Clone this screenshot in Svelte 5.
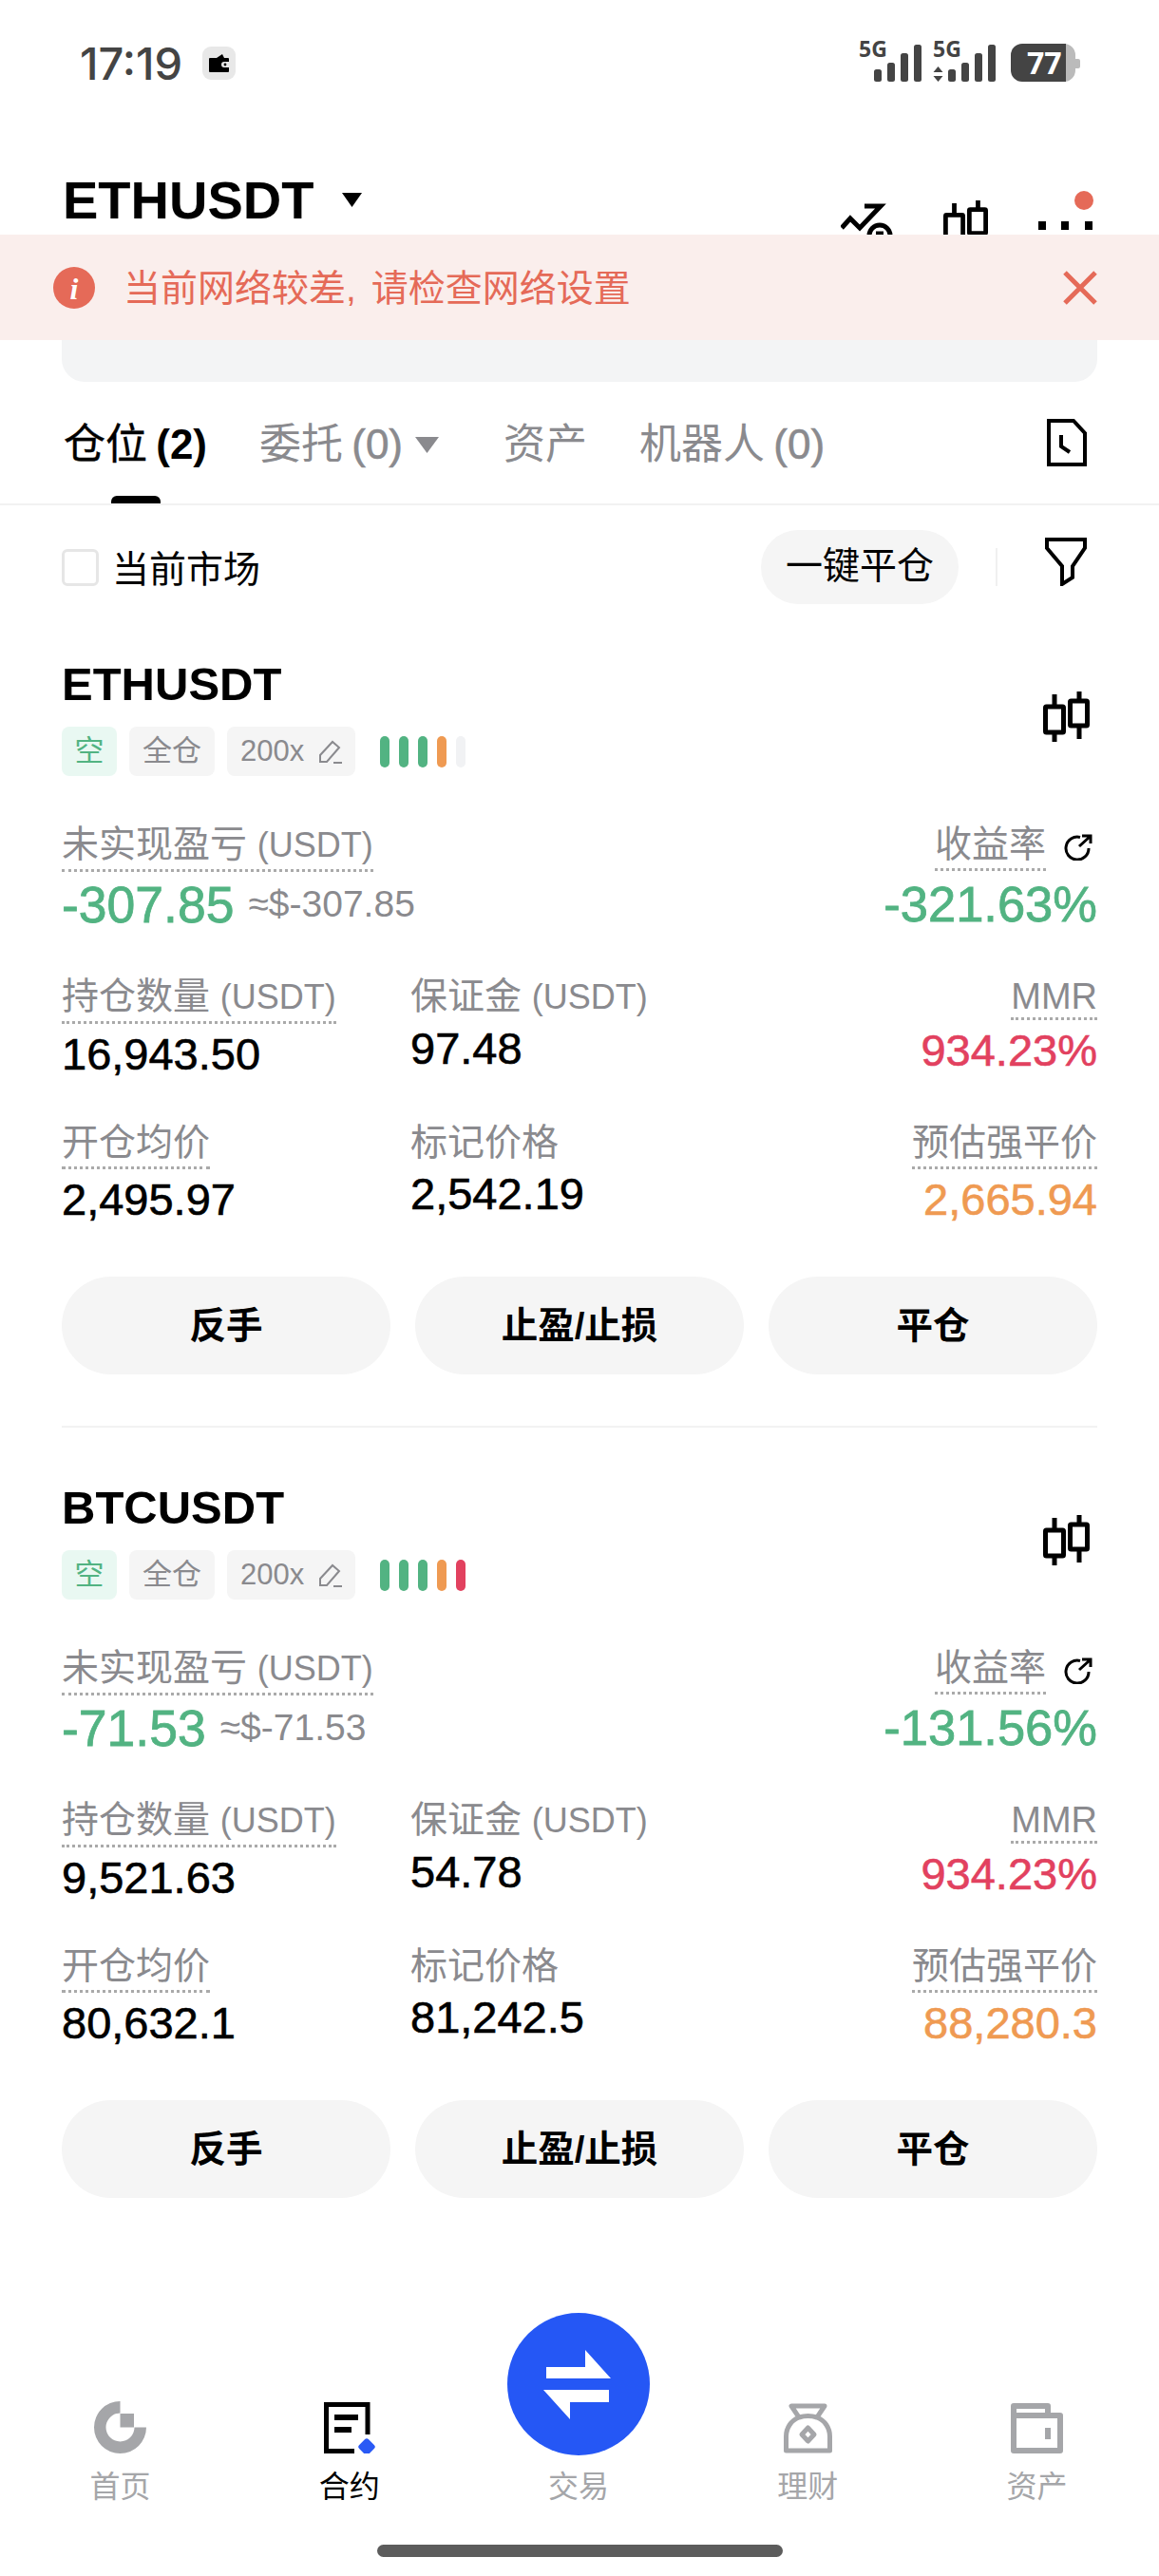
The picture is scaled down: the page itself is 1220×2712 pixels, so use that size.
<script>
  const tabs = [
    { label: '仓位', count: '(2)', active: true },
    { label: '委托', count: '(0)', caret: true },
    { label: '资产', count: '' },
    { label: '机器人', count: '(0)' }
  ];

  const positions = [
    {
      symbol: 'ETHUSDT',
      pnl: '-307.85',
      usd: '≈$-307.85',
      roe: '-321.63%',
      size: '16,943.50',
      margin: '97.48',
      mmr: '934.23%',
      entry: '2,495.97',
      mark: '2,542.19',
      liq: '2,665.94',
      risk: ['#52b382', '#52b382', '#52b382', '#ef9a52', '#f1f2f4']
    },
    {
      symbol: 'BTCUSDT',
      pnl: '-71.53',
      usd: '≈$-71.53',
      roe: '-131.56%',
      size: '9,521.63',
      margin: '54.78',
      mmr: '934.23%',
      entry: '80,632.1',
      mark: '81,242.5',
      liq: '88,280.3',
      risk: ['#52b382', '#52b382', '#52b382', '#ef9a52', '#e2415f']
    }
  ];

  const nav = ['首页', '合约', '交易', '理财', '资产'];
</script>

{#snippet candle(cls)}
  <svg class={cls} viewBox="0 0 49 53" fill="none" stroke="#000" stroke-width="5">
    <rect x="2.5" y="16" width="19" height="27" rx="1" />
    <path d="M12 3v13M12 43v10" />
    <rect x="28.5" y="10" width="18" height="26" rx="1" />
    <path d="M38 0v10M38 36v14" />
  </svg>
{/snippet}

<div class="page">
  <div class="status">
    <span class="time">17:19</span>
    <span class="wallet">
      <svg width="23" height="21" viewBox="0 0 23 21">
        <path d="M9 5 15 1l2 4z" fill="#000" />
        <path d="M2 5h19a1 1 0 0 1 1 1v3h-5a3 3 0 0 0 0 6h5v4a1 1 0 0 1-1 1H2a1 1 0 0 1-1-1V6a1 1 0 0 1 1-1z" fill="#000" />
        <circle cx="18" cy="12" r="1.4" fill="#000" />
      </svg>
    </span>
    <svg class="signal" width="235" height="62" viewBox="0 -12 235 62">
      <g fill="#444">
        <text x="0" y="20" class="net">5G</text>
        <rect x="16" y="33" width="8" height="13" rx="2.5" />
        <rect x="30" y="26" width="8" height="20" rx="2.5" />
        <rect x="44" y="16" width="8" height="30" rx="2.5" />
        <rect x="58" y="7" width="8" height="39" rx="2.5" />
        <text x="78" y="20" class="net">5G</text>
        <path d="M83.500 30l5 6h-10zM83.500 46l5-6h-10z" />
        <rect x="94" y="33" width="8" height="13" rx="2.5" />
        <rect x="108" y="26" width="8" height="20" rx="2.5" />
        <rect x="122" y="16" width="8" height="30" rx="2.5" />
        <rect x="136" y="7" width="8" height="39" rx="2.5" />
      </g>
      <path d="M212 6h4a12 12 0 0 1 12 12v4h3a2 2 0 0 1 2 2v6a2 2 0 0 1-2 2h-3v2a12 12 0 0 1-12 12h-4z" fill="#bbb" />
      <path d="M172 6h46v40h-46a12 12 0 0 1-12-12V18a12 12 0 0 1 12-12z" fill="#444" />
      <text x="177" y="38" class="batt">77</text>
    </svg>
  </div>

  <div class="header">
    <span class="pair">ETHUSDT</span>
    <svg class="pair-caret" width="21" height="15" viewBox="0 0 21 15"><path d="M0 0h21L10.500 15z" fill="#000" /></svg>
    <div class="header-icons">
      <svg width="60" height="60" viewBox="0 0 60 60" fill="none" stroke="#000" stroke-width="5">
        <path d="M1 40 10 30 20 40 42 17H25" />
        <circle cx="41" cy="48" r="11" />
        <path d="M37 46h8" />
      </svg>
      {@render candle('candle-top')}
      <svg width="58" height="60" viewBox="0 0 58 60">
        <circle cx="48" cy="11" r="10" fill="#e56a58" />
        <rect x="0" y="33" width="8" height="9" />
        <rect x="24" y="33" width="8" height="9" />
        <rect x="49" y="33" width="8" height="9" />
      </svg>
    </div>
  </div>

  <div class="banner">
    <svg width="44" height="44" viewBox="0 0 44 44">
      <circle cx="22" cy="22" r="22" fill="#e56a58" />
      <text x="22" y="34" class="info">i</text>
    </svg>
    <span class="banner-text">当前网络较差, 请检查网络设置</span>
    <svg class="banner-close" width="36" height="36" viewBox="0 0 36 36" stroke="#e56a58" stroke-width="5">
      <path d="M2 2l32 32M34 2 2 34" />
    </svg>
  </div>
  <div class="hidden-card"></div>

  <div class="tabs">
    {#each tabs as tab}
      <div class="tab" class:active={tab.active} class:has-caret={tab.caret}>
        <span>{tab.label}{#if tab.count}{' '}<b class="count">{tab.count}</b>{/if}</span>
        {#if tab.caret}
          <svg width="25" height="17" viewBox="0 0 25 17"><path d="M0 0h25L12.500 17z" fill="#8a8a8e" /></svg>
        {/if}
      </div>
    {/each}
    <svg class="doc" width="42" height="50" viewBox="0 0 42 50" fill="none" stroke="#000" stroke-width="4">
      <path d="M2 2h26l12 13v33H2z" />
      <path d="M15 17v12l9 6" />
    </svg>
  </div>

  <div class="filter-row">
    <span class="check"></span>
    <span class="check-label">当前市场</span>
    <span class="close-all">一键平仓</span>
    <span class="vline"></span>
    <svg width="44" height="51" viewBox="0 0 44 51" fill="none" stroke="#000" stroke-width="4">
      <path d="M2 2h40v9L29 30v12l-11 7V30L2 11z" />
    </svg>
  </div>

  {#each positions as p, i}
    <section class="card" class:last={i === positions.length - 1}>
      <div class="card-head">
        <div>
          <div class="symbol">{p.symbol}</div>
          <div class="tags">
            <span class="tag short">空</span>
            <span class="tag">全仓</span>
            <span class="tag">200x
              <svg width="24" height="25" viewBox="0 0 24 25" fill="none" stroke="#8a8a8e" stroke-width="2">
                <path d="M1 23v-7L14 2l7 6L8 23zM15 24h9" />
              </svg>
            </span>
            <span class="risk">
              {#each p.risk as color}
                <i style="background: {color}"></i>
              {/each}
            </span>
          </div>
        </div>
        {@render candle('candle-side')}
      </div>

      <div class="pnl-row">
        <div>
          <div><span class="label dotted">未实现盈亏 <span class="unit">(USDT)</span></span></div>
          <div class="pnl-value">
            <span class="big green">{p.pnl}</span>
            <span class="usd">{p.usd}</span>
          </div>
        </div>
        <div class="right">
          <div class="roe-label">
            <span class="label dotted">收益率</span>
            <svg width="30" height="28" viewBox="0 0 30 28" fill="none" stroke="#000" stroke-width="3">
              <path d="M17 3.500A12 12 0 1 0 26 15M16 13 27 3M19 2h9v8" />
            </svg>
          </div>
          <div class="pnl-value"><span class="big roe green">{p.roe}</span></div>
        </div>
      </div>

      <div class="grid row-two">
        <div>
          <span class="label dotted">持仓数量 <span class="unit">(USDT)</span></span>
          <div class="value">{p.size}</div>
        </div>
        <div>
          <span class="label">保证金 <span class="unit">(USDT)</span></span>
          <div class="value">{p.margin}</div>
        </div>
        <div class="right">
          <span class="label dotted tight">MMR</span>
          <div class="value red">{p.mmr}</div>
        </div>
      </div>

      <div class="grid">
        <div>
          <span class="label dotted">开仓均价</span>
          <div class="value">{p.entry}</div>
        </div>
        <div>
          <span class="label">标记价格</span>
          <div class="value">{p.mark}</div>
        </div>
        <div class="right">
          <span class="label dotted">预估强平价</span>
          <div class="value orange">{p.liq}</div>
        </div>
      </div>

      <div class="actions">
        <span>反手</span>
        <span>止盈/止损</span>
        <span>平仓</span>
      </div>
    </section>
  {/each}

  <nav class="nav">
    {#each nav as item, i}
      <div class="nav-item" class:current={i === 1}>
        {#if i === 0}
          <svg width="55" height="55" viewBox="0 0 55 55" fill="#a5a6a9">
            <path d="M27.500 0A27.500 27.500 0 1 0 55 27.500H42.500A15 15 0 1 1 27.500 12.500z" />
            <rect x="27.500" y="13" width="14.500" height="14.500" />
          </svg>
        {:else if i === 1}
          <svg width="55" height="55" viewBox="0 0 55 55">
            <path d="M47 35V3.500H3.500v49H33" fill="none" stroke="#000" stroke-width="5" />
            <rect x="12" y="14" width="25" height="6" />
            <rect x="12" y="27" width="18" height="6" />
            <rect x="39" y="41" width="14" height="14" rx="3" transform="rotate(45 46 48)" fill="#2a5af5" />
          </svg>
        {:else if i === 2}
          <div class="trade">
            <svg width="150" height="150" viewBox="0 0 150 150" fill="#fff">
              <path d="M82 39 109 69H41V57H82z" />
              <path d="M107 81H38L66 112V94h41z" />
            </svg>
          </div>
        {:else if i === 3}
          <svg width="51" height="55" viewBox="0 0 51 55" fill="none" stroke="#a5a6a9" stroke-width="5" stroke-linejoin="round">
            <path d="M8 5h35l-8 12c8 3 13.500 11 13.500 20v15h-46V37c0-9 5.500-17 13.500-20z" />
            <path d="M16 17q9.500-3 19 0" />
            <path d="M25.500 28l6.500 7-6.500 7-6.500-7z" />
          </svg>
        {:else}
          <svg width="55" height="55" viewBox="0 0 55 55" fill="none" stroke="#a5a6a9" stroke-width="6" stroke-linejoin="round">
            <path d="M3 5h36v10h13v37H3zM3 15h36" />
            <path d="M39 28v12" />
          </svg>
        {/if}
        <span>{item}</span>
      </div>
    {/each}
  </nav>
  <div class="home-bar"></div>
</div>

<style>
  :global(body) {
    margin: 0;
    background: #fff;
  }
  .page {
    width: 1220px;
    min-height: 2712px;
    display: flex;
    flex-direction: column;
    overflow: hidden;
    font-family: "Liberation Sans", "Noto Sans CJK SC", sans-serif;
    color: #000;
  }

  .status {
    height: 132px;
    display: flex;
    align-items: center;
    padding-left: 84px;
  }
  .time {
    font-family: Inter, sans-serif;
    font-size: 47px;
    font-weight: 500;
    color: #444;
    line-height: 1;
  }
  .wallet {
    width: 35px;
    height: 35px;
    margin-left: 21px;
    background: #e8e8e8;
    border-radius: 9px;
    display: flex;
    align-items: center;
    justify-content: center;
  }
  .signal {
    margin-left: auto;
    margin-right: 81px;
    margin-top: -14px;
  }
  .net {
    font-family: "Noto Sans", sans-serif;
    font-size: 23px;
    font-weight: 700;
  }
  .batt {
    font-family: "Noto Sans", sans-serif;
    font-size: 32px;
    font-weight: 700;
    fill: #fff;
  }
  .info {
    font-family: "Liberation Serif", serif;
    font-size: 32px;
    font-weight: 700;
    font-style: italic;
    text-anchor: middle;
    fill: #fff;
  }

  .header {
    height: 115px;
    box-sizing: border-box;
    padding: 51px 69px 0 66px;
    display: flex;
    overflow: hidden;
  }
  .pair {
    font-size: 56px;
    font-weight: 700;
    line-height: 56px;
  }
  .pair-caret {
    margin: 20px 0 0 30px;
  }
  .header-icons {
    margin-left: auto;
    margin-top: 17px;
    display: flex;
    align-items: flex-start;
  }
  .candle-top {
    width: 47px;
    height: 51px;
    margin: 11px 53px 0 48px;
  }

  .banner {
    height: 111px;
    background: #faeeec;
    display: flex;
    align-items: center;
    padding: 0 65px 0 56px;
  }
  .banner-text {
    margin: -5px 0 0 30px;
    font-size: 39px;
    word-spacing: 5px;
    color: #e56a58;
  }
  .banner-close {
    margin-left: auto;
  }
  .hidden-card {
    height: 44px;
    margin: 0 65px;
    background: #f3f4f5;
    border-radius: 0 0 24px 24px;
  }

  .tabs {
    height: 130px;
    box-sizing: border-box;
    padding: 0 76px 0 67px;
    display: flex;
    align-items: flex-start;
    gap: 55px;
    border-bottom: 2px solid #f2f2f2;
  }
  .tab {
    position: relative;
    font-size: 44px;
    line-height: 50px;
    margin-top: 41px;
    color: #8a8a8e;
    display: flex;
    align-items: center;
    white-space: pre;
    word-spacing: -3px;
  }
  .tab.has-caret {
    padding-right: 13px;
  }
  .tab svg {
    margin-left: 13px;
  }
  .tab.active {
    color: #000;
    -webkit-text-stroke: 0.4px #000;
  }
  .count {
    font-weight: 400;
    -webkit-text-stroke: 0.6px #8a8a8e;
  }
  .tab.active .count {
    font-weight: 700;
    -webkit-text-stroke: 0;
  }
  .tab.active::after {
    content: "";
    position: absolute;
    left: 50px;
    top: 79px;
    width: 52px;
    height: 8px;
    background: #000;
    border-radius: 6px 6px 0 0;
  }
  .doc {
    margin-left: auto;
    margin-top: 39px;
  }

  .filter-row {
    box-sizing: border-box;
    height: 104px;
    padding: 26px 76px 0 65px;
    display: flex;
    align-items: center;
  }
  .filter-row > * {
    flex: none;
  }
  .check {
    box-sizing: border-box;
    width: 39px;
    height: 39px;
    border: 3px solid #e6e6e6;
    border-radius: 6px;
  }
  .check-label {
    margin: -2px 0 0 14px;
    font-size: 39px;
  }
  .close-all {
    margin-left: auto;
    width: 208px;
    height: 78px;
    border-radius: 39px;
    background: #f5f5f5;
    font-size: 39px;
    line-height: 76px;
    text-align: center;
  }
  .vline {
    width: 2px;
    height: 40px;
    margin: 0 50px 0 39px;
    background: #f0f0f0;
  }
  .filter-row svg {
    margin-top: -12px;
  }

  .card {
    height: 867px;
    box-sizing: border-box;
    margin: 0 65px;
    padding-top: 56px;
    border-bottom: 2px solid #f2f2f2;
  }
  .card.last {
    border-bottom: 0;
  }
  .card-head {
    display: flex;
    justify-content: space-between;
    align-items: center;
  }
  .candle-side {
    width: 49px;
    height: 53px;
    margin-right: 8px;
  }
  .symbol {
    font-size: 49px;
    font-weight: 700;
    line-height: 56px;
  }
  .tags {
    margin-top: 17px;
    display: flex;
    gap: 13px;
  }
  .tag {
    height: 52px;
    box-sizing: border-box;
    padding: 0 14px;
    background: #f5f5f5;
    border-radius: 8px;
    color: #8a8a8e;
    font-size: 31px;
    line-height: 50px;
    display: flex;
    align-items: center;
    gap: 16px;
  }
  .tag.short {
    background: #e9f8f2;
    color: #52b382;
    width: 58px;
    padding: 0;
    justify-content: center;
  }
  .risk {
    display: flex;
    align-items: center;
    gap: 10px;
    margin-left: 13px;
  }
  .risk i {
    width: 10px;
    height: 33px;
    border-radius: 5px;
  }

  .pnl-row {
    margin-top: 50px;
    height: 160px;
    display: flex;
    justify-content: space-between;
  }
  .label {
    display: inline-block;
    font-size: 39px;
    line-height: 44px;
    color: #8a8a8e;
  }
  .unit {
    font-size: 36px;
  }
  .dotted {
    padding-bottom: 3px;
    border-bottom: 3px dotted #aaa;
  }
  .dotted.tight {
    padding-bottom: 0;
    font-size: 38px;
  }
  .pnl-value {
    margin-top: 4px;
    height: 60px;
    display: flex;
    align-items: center;
    gap: 15px;
  }
  .right {
    text-align: right;
  }
  .right .pnl-value {
    justify-content: flex-end;
  }
  .big {
    font-size: 53.500px;
    -webkit-text-stroke: 0.8px currentColor;
  }
  .big.roe {
    font-size: 52.500px;
  }
  .green {
    color: #52b382;
  }
  .red {
    color: #e2415f;
  }
  .orange {
    color: #ef9a52;
  }
  .usd {
    font-size: 39px;
    color: #8a8a8e;
  }
  .roe-label {
    display: flex;
    justify-content: flex-end;
    align-items: center;
    gap: 19px;
  }
  .roe-label svg {
    margin-right: 5px;
  }

  .grid {
    display: grid;
    grid-template-columns: 367px 1fr auto;
  }
  .row-two {
    height: 154px;
  }
  .value {
    font-size: 47px;
    line-height: 52px;
    margin-top: 6px;
    -webkit-text-stroke: 0.6px currentColor;
  }

  .actions {
    display: flex;
    gap: 26px;
    margin-top: 55px;
  }
  .actions span {
    flex: 1;
    height: 103px;
    border-radius: 52px;
    background: #f5f5f5;
    font-size: 38.500px;
    font-weight: 700;
    line-height: 103px;
    text-align: center;
  }

  .nav {
    margin-top: auto;
    padding: 0 8px 0 6px;
    display: grid;
    grid-template-columns: repeat(5, 1fr);
    align-items: end;
  }
  .nav-item {
    display: flex;
    flex-direction: column;
    align-items: center;
    color: #a5a6a9;
    font-size: 32px;
    line-height: 40px;
    gap: 13px;
  }
  .nav-item > svg {
    margin-bottom: 2px;
  }
  .nav-item.current {
    color: #000;
  }
  .trade {
    width: 150px;
    height: 150px;
    border-radius: 50%;
    background: #2557f5;
  }
  .trade svg {
    display: block;
  }

  .home-bar {
    width: 427px;
    height: 13px;
    margin: 41px auto 20px;
    border-radius: 7px;
    background: #5c5c5c;
  }
</style>
